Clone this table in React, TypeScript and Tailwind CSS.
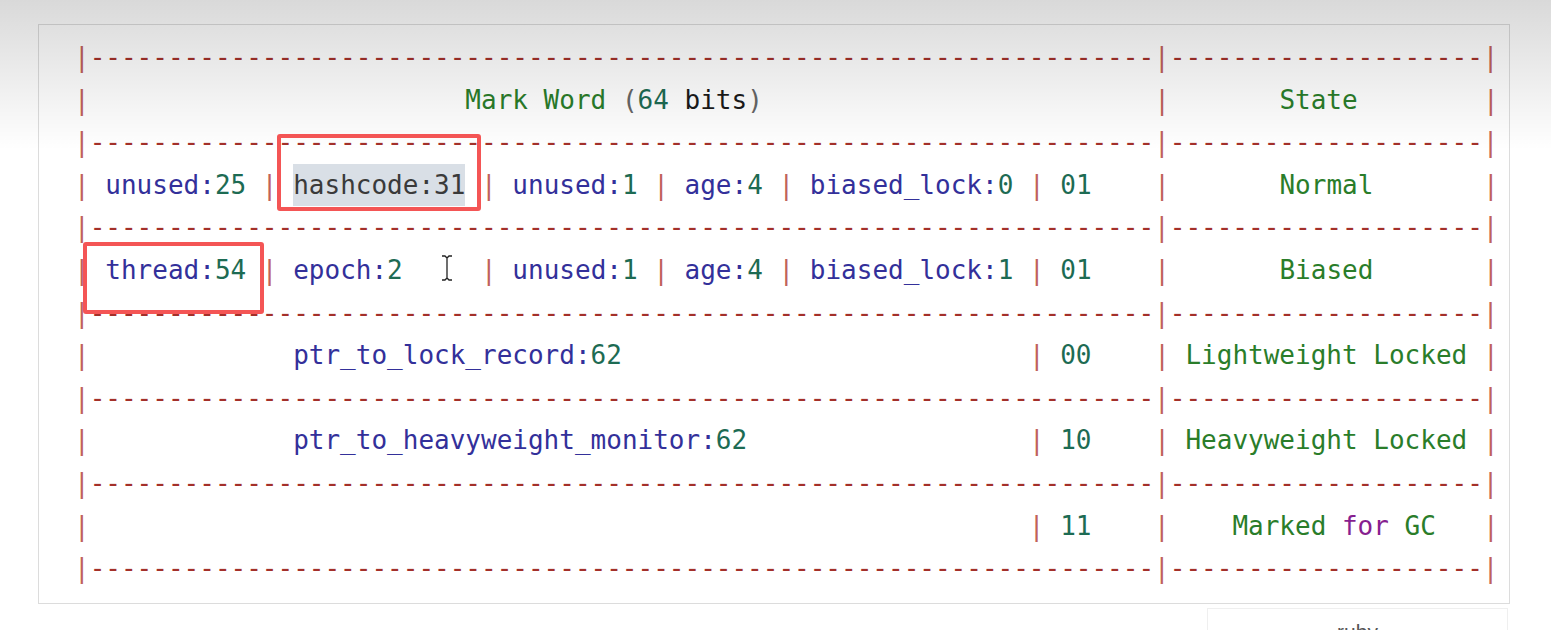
import React from "react";

const s = (n: number) => " ".repeat(n);

const Bar = () => <span className="text-[#c0625a]">|</span>;
const Dash = ({ n }: { n: number }) => <span className="text-[#a3302a]">{"-".repeat(n)}</span>;
const Num = ({ children }: { children: React.ReactNode }) => <span className="text-[#1d6b53]">{children}</span>;
const Green = ({ children }: { children: React.ReactNode }) => <span className="text-[#2a7d2a]">{children}</span>;
const Field = ({ name, bits }: { name: string; bits: string }) => (
	<>
		<span className="text-[#33309a]">{name}:</span>
		<Num>{bits}</Num>
	</>
);

const Line = ({ children }: { children?: React.ReactNode }) => (
	<div className="h-[42.6px] leading-[42.6px] whitespace-pre">{children}</div>
);

const Rule = () => (
	<Line>
		<Bar />
		<Dash n={68} />
		<Bar />
		<Dash n={20} />
		<Bar />
	</Line>
);

const App = () => {
	return (
		<div className="relative w-full h-[630px] bg-white overflow-hidden">
			<div className="ml-[38px] mt-[24px] w-[1472px] h-[580px] border border-[#dcdcdc] bg-white pl-[35px] pt-[11px] font-['DejaVu_Sans_Mono',monospace] text-[26px]">
				<Rule />
				<Line>
					<Bar />
					{s(24)}
					<Green>Mark Word</Green> <span className="text-[#666]">(</span>
					<Num>64</Num> <span className="text-[#1a1a1a]">bits</span>
					<span className="text-[#666]">)</span>
					{s(25)}
					<Bar />
					{s(7)}
					<Green>State</Green>
					{s(8)}
					<Bar />
				</Line>
				<Rule />
				<Line>
					<Bar />{" "}
					<Field name="unused" bits="25" />{" "}
					<Bar />{" "}
					<span className="inline-block h-[42.6px] bg-[#d9dfe6] text-[#3a3a3a]">hashcode:31</span>{" "}
					<Bar />{" "}
					<Field name="unused" bits="1" />{" "}
					<Bar />{" "}
					<Field name="age" bits="4" />{" "}
					<Bar />{" "}
					<Field name="biased_lock" bits="0" />{" "}
					<Bar />{" "}
					<Num>01</Num>
					{s(4)}
					<Bar />
					{s(7)}
					<Green>Normal</Green>
					{s(7)}
					<Bar />
				</Line>
				<Rule />
				<Line>
					<Bar />{" "}
					<Field name="thread" bits="54" />{" "}
					<Bar />{" "}
					<Field name="epoch" bits="2" />
					{s(5)}
					<Bar />{" "}
					<Field name="unused" bits="1" />{" "}
					<Bar />{" "}
					<Field name="age" bits="4" />{" "}
					<Bar />{" "}
					<Field name="biased_lock" bits="1" />{" "}
					<Bar />{" "}
					<Num>01</Num>
					{s(4)}
					<Bar />
					{s(7)}
					<Green>Biased</Green>
					{s(7)}
					<Bar />
				</Line>
				<Rule />
				<Line>
					<Bar />
					{s(13)}
					<Field name="ptr_to_lock_record" bits="62" />
					{s(26)}
					<Bar />{" "}
					<Num>00</Num>
					{s(4)}
					<Bar />{" "}
					<Green>Lightweight Locked</Green>{" "}
					<Bar />
				</Line>
				<Rule />
				<Line>
					<Bar />
					{s(13)}
					<Field name="ptr_to_heavyweight_monitor" bits="62" />
					{s(18)}
					<Bar />{" "}
					<Num>10</Num>
					{s(4)}
					<Bar />{" "}
					<Green>Heavyweight Locked</Green>{" "}
					<Bar />
				</Line>
				<Rule />
				<Line>
					<Bar />
					{s(60)}
					<Bar />{" "}
					<Num>11</Num>
					{s(4)}
					<Bar />
					{s(4)}
					<Green>Marked</Green> <span className="text-[#871f8f]">for</span> <Green>GC</Green>
					{s(3)}
					<Bar />
				</Line>
				<Rule />
			</div>

			<div className="ml-[1207px] mt-[4px] w-[301px] h-[40px] border-l border-r border-t border-[#efefef] text-center pt-[7px] font-['Liberation_Sans',sans-serif] text-[21px] text-[#555]">
				ruby
			</div>

			{/* top fade from the video frame */}
			<div className="pointer-events-none absolute inset-x-0 top-0 h-[150px] bg-gradient-to-b from-[rgba(0,0,0,0.15)] to-transparent" />

			{/* annotation boxes */}
			<div className="pointer-events-none absolute left-[277px] top-[134px] w-[204px] h-[77px] border-[4px] border-[#f45555] rounded-[3px]" />
			<div className="pointer-events-none absolute left-[83px] top-[242px] w-[181px] h-[72px] border-[4px] border-[#f45555] rounded-[3px]" />

			{/* mouse cursor */}
			<svg className="absolute left-[440px] top-[255px]" width="14" height="26" viewBox="0 0 14 26">
				<path d="M2 1h3l2 2 2-2h3M7 3v20M2 25h3l2-2 2 2h3" fill="none" stroke="#fff" strokeWidth="3" />
				<path d="M2 1h3l2 2 2-2h3M7 3v20M2 25h3l2-2 2 2h3" fill="none" stroke="#222" strokeWidth="1.3" />
			</svg>
		</div>
	);
};

export default App;
